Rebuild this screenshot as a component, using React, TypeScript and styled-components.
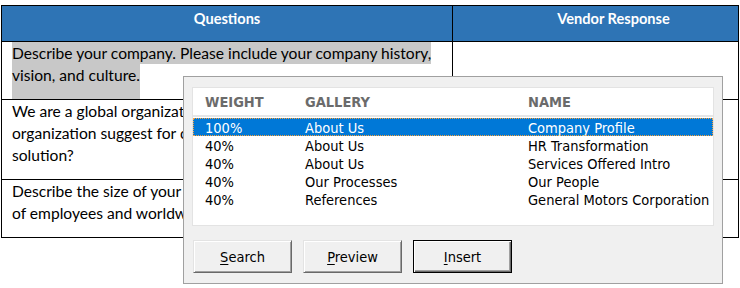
import React from "react";
import styled, { createGlobalStyle, css } from "styled-components";

const GlobalStyle = createGlobalStyle`
  html, body {
    margin: 0;
    padding: 0;
    background: #ffffff;
  }
  body {
    width: 740px;
    height: 288px;
    overflow: hidden;
  }
`;

interface Result {
  weight: string;
  gallery: string;
  name: string;
}

const results: Result[] = [
  { weight: "100%", gallery: "About Us", name: "Company Profile" },
  { weight: "40%", gallery: "About Us", name: "HR Transformation" },
  { weight: "40%", gallery: "About Us", name: "Services Offered Intro" },
  { weight: "40%", gallery: "Our Processes", name: "Our People" },
  { weight: "40%", gallery: "References", name: "General Motors Corporation" },
];

function App() {
  return (
    <>
      <GlobalStyle />
      <Page>
        <DocTable>
          <HeadCell>Questions</HeadCell>
          <HeadCell $shift>Vendor Response</HeadCell>

          <BodyCell>
            <SelLine>Describe your company. Please include your company history,</SelLine>
            <SelLine $last>vision, and culture.</SelLine>
          </BodyCell>
          <BodyCell />

          <BodyCell>
            <Line>We are a global organization with offices in 40 countries.</Line>
            <Line>organization suggest for our HR transformation</Line>
            <Line>solution?</Line>
          </BodyCell>
          <BodyCell />

          <BodyCell>
            <Line>Describe the size of your organization, including the</Line>
            <Line>of employees and worldwide locations.</Line>
          </BodyCell>
          <BodyCell />
        </DocTable>

        <Dialog>
          <ListBox>
            <ListHeader>
              <span>WEIGHT</span>
              <span>GALLERY</span>
              <span>NAME</span>
            </ListHeader>
            {results.map((r, i) => (
              <ListRow key={i} $selected={i === 0}>
                <span>{r.weight}</span>
                <span>{r.gallery}</span>
                <span>{r.name}</span>
              </ListRow>
            ))}
          </ListBox>
          <ButtonBar>
            <DlgButton>
              <u>S</u>earch
            </DlgButton>
            <DlgButton>
              <u>P</u>review
            </DlgButton>
            <DlgButton $default>
              <u>I</u>nsert
            </DlgButton>
          </ButtonBar>
        </Dialog>
      </Page>
    </>
  );
}

const Page = styled.div`
  position: relative;
  padding: 5px 0 0 1px;
  font-family: "Lato", "Liberation Sans", sans-serif;
`;

const DocTable = styled.div`
  display: grid;
  grid-template-columns: 451px 286px;
  grid-template-rows: 36px 58px 80px 58px;
  width: 738px;
  box-sizing: border-box;
  border-left: 1px solid #000;
  border-top: 1px solid #000;
`;

const HeadCell = styled.div<{ $shift?: boolean }>`
  background: #2e74b5;
  color: #ffffff;
  font-weight: bold;
  font-size: 14.6px;
  display: flex;
  align-items: flex-start;
  justify-content: center;
  padding-top: 2px;
  line-height: 22px;
  border-right: 1px solid #000;
  border-bottom: 1px solid #000;
  ${(p) =>
    p.$shift &&
    css`
      padding-left: 36px;
    `}
`;

const BodyCell = styled.div`
  border-right: 1px solid #000;
  border-bottom: 1px solid #000;
  padding-left: 10px;
  font-size: 15.6px;
  line-height: 22px;
  color: #000;
  overflow: hidden;
  white-space: nowrap;
`;

const Line = styled.div``;

const SelLine = styled.div<{ $last?: boolean }>`
  display: table;
  background: #c8c8c8;
  ${(p) =>
    p.$last &&
    css`
      padding-bottom: 14px;
    `}
`;

const Dialog = styled.div`
  position: absolute;
  left: 183px;
  top: 76px;
  width: 540px;
  height: 208px;
  box-sizing: border-box;
  border: 1px solid #a0a0a0;
  background-color: #f0f0f0;
  background-image: radial-gradient(#e0e0e0 0.6px, transparent 0.7px);
  background-size: 4px 4px;
  padding: 10px 8px 0 8px;
  font-family: "DejaVu Sans Condensed", "DejaVu Sans", sans-serif;
  font-size: 14.5px;
`;

const ListBox = styled.div`
  background: #ffffff;
  border: 1px solid #e3e3e3;
  height: 139px;
  box-sizing: border-box;
`;

const columns = css`
  display: grid;
  grid-template-columns: 100px 223px 1fr;
  padding-left: 12px;
  white-space: nowrap;
`;

const ListHeader = styled.div`
  ${columns};
  height: 29px;
  align-items: center;
  color: #6b6b6b;
  font-weight: bold;
  border-bottom: 2px solid #e6e6e6;
  padding-top: 1px;
  box-sizing: border-box;
`;

const ListRow = styled.div<{ $selected?: boolean }>`
  ${columns};
  height: 18px;
  line-height: 16px;
  padding-top: 2px;
  color: #000;
  box-sizing: border-box;
  ${(p) =>
    p.$selected &&
    css`
      margin-top: 1px;
      background: #0078d7;
      color: #ffffff;
      outline: 1px dotted #f7a13a;
      outline-offset: -1px;
    `}
`;

const ButtonBar = styled.div`
  display: flex;
  gap: 11px;
  margin-top: 14px;
  padding-left: 1px;
`;

const DlgButton = styled.button<{ $default?: boolean }>`
  width: 99px;
  height: 33px;
  box-sizing: border-box;
  font-family: "DejaVu Sans Condensed", "DejaVu Sans", sans-serif;
  font-size: 14.5px;
  color: #000;
  background-color: #f0f0f0;
  background-image: radial-gradient(#e0e0e0 0.6px, transparent 0.7px);
  background-size: 4px 4px;
  border: 1px solid;
  border-color: #e3e3e3 #696969 #696969 #e3e3e3;
  box-shadow: inset 1px 1px #ffffff, inset -1px -1px #a0a0a0;
  padding: 0;
  u {
    text-decoration-thickness: 1px;
    text-underline-offset: 2px;
  }
  ${(p) =>
    p.$default &&
    css`
      border: 1px solid #000;
      box-shadow: inset 1px 1px #ffffff, inset -1px -1px #696969,
        inset -2px -2px #a0a0a0;
    `}
`;

export default App;
